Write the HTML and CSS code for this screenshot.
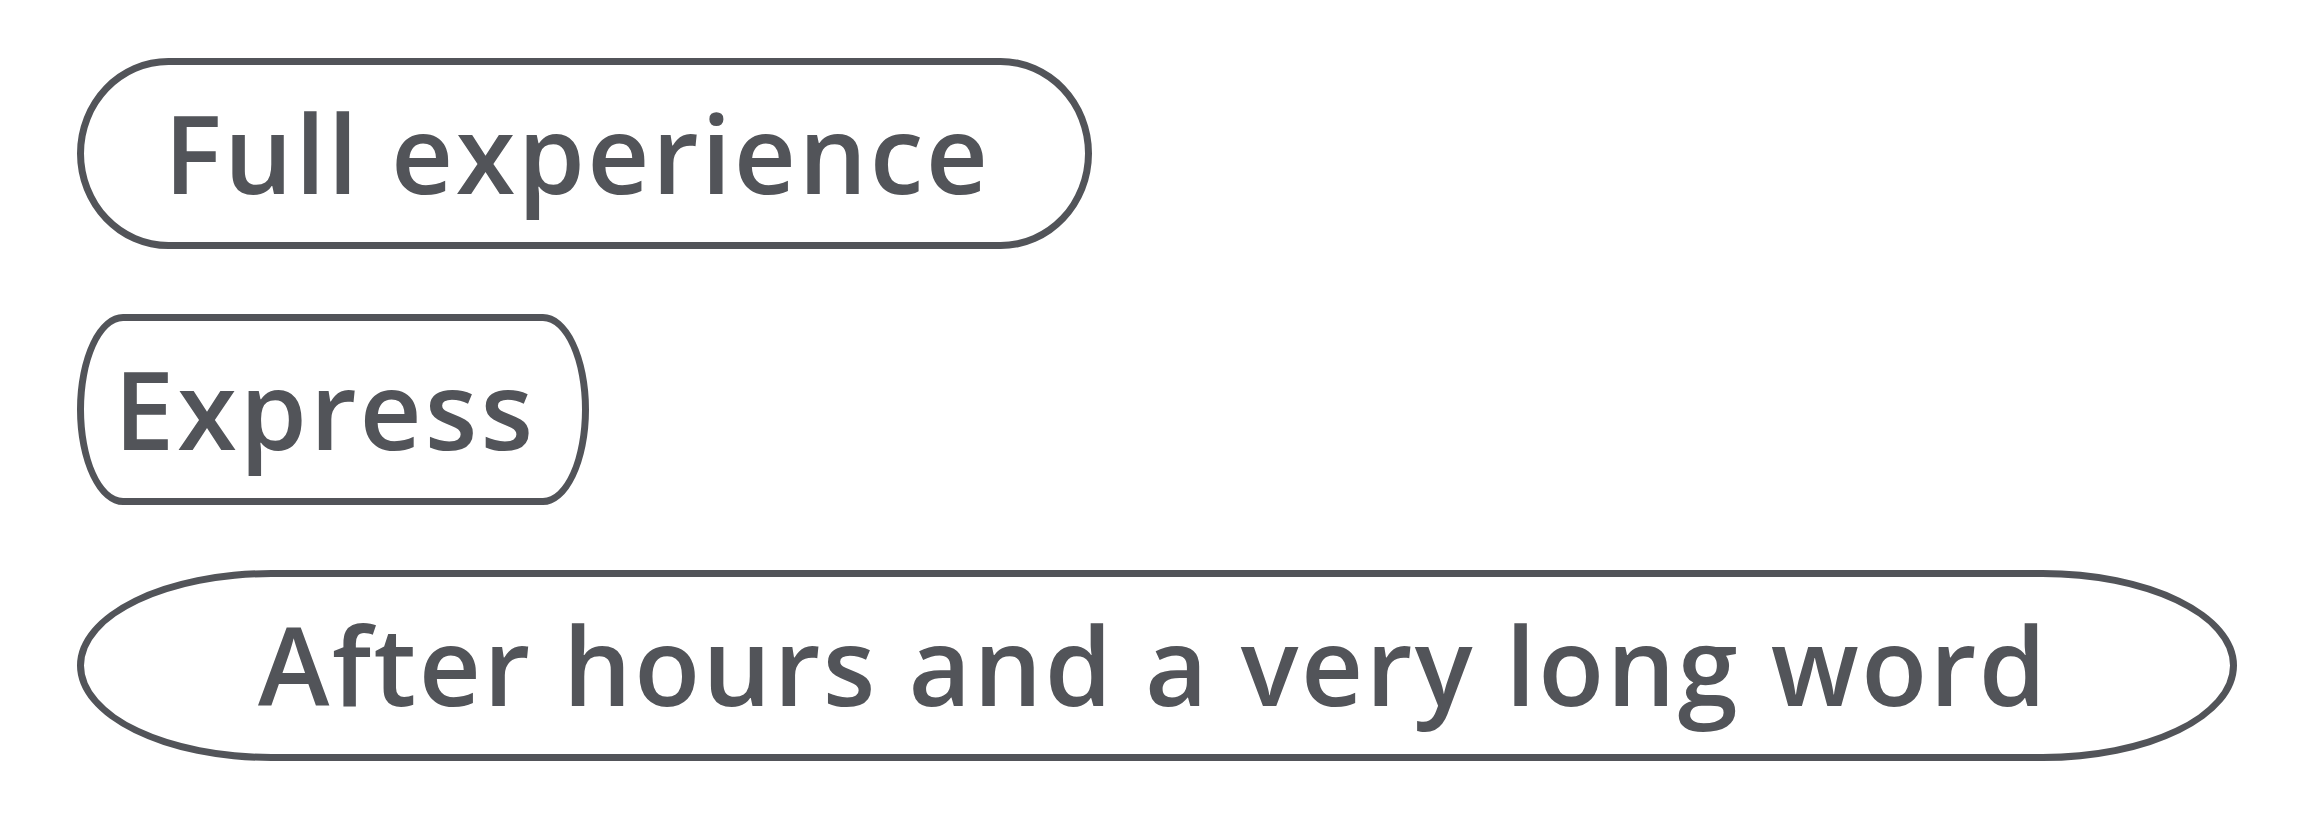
FILE: index.html
```html
<!DOCTYPE html>
<html>
    <head>
        <title>pill buttons</title>
        <link rel="stylesheet" href="styles.css">
    </head>
    <body>
        <div id="list">
            <button class="pill pill-full">Full experience</button>
            <button class="pill pill-express">Express</button>
            <button class="pill pill-long">After hours and a very long word</button>
        </div>
    </body>
</html>
```
FILE: styles.css
```css
body{
    margin:0;
    background-color:#ffffff;
}
#list{
    display:flex;
    flex-direction:column;
    align-items:flex-start;
    gap:65px;
    padding:58px 0 0 77px;
}
.pill{
    box-sizing:border-box;
    display:flex;
    align-items:center;
    height:191px;
    margin:0;
    padding:0 0 2px 0;
    border:7px solid #525459;
    border-radius:9% / 50%;
    background-color:#ffffff;
    color:#525459;
    font-family:"Open Sans", sans-serif;
    font-weight:600;
    font-size:108px;
    letter-spacing:2.5px;
    line-height:1;
    white-space:nowrap;
}
.pill-full{
    width:1015px;
    padding-left:80px;
}
.pill-express{
    width:512px;
    padding-left:30px;
    letter-spacing:3px;
}
.pill-long{
    width:2160px;
    padding-left:174px;
}
```
